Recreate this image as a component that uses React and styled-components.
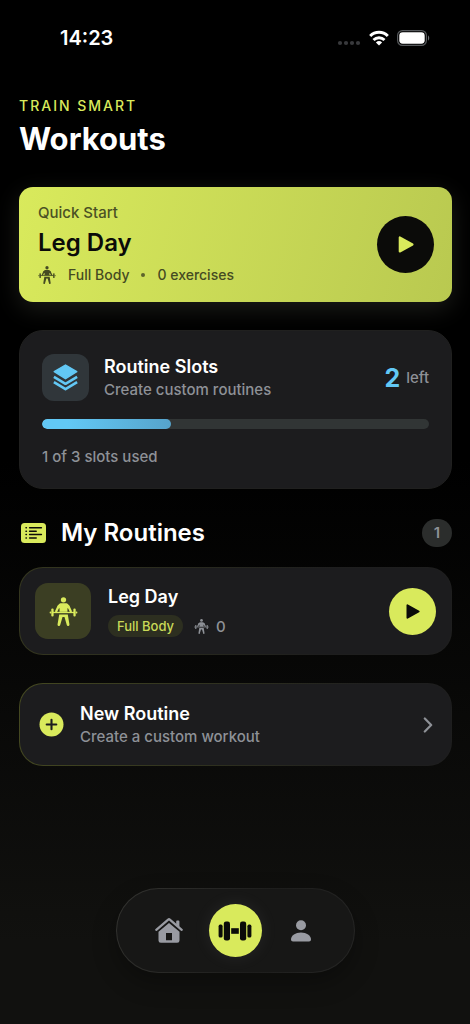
import React from 'react';
import styled, { createGlobalStyle } from 'styled-components';

const lime = '#d9ea5c';
const ink = '#0b0b09';
const blue = '#62c8f5';
const grey = '#8e9197';

const routines = [{ id: 1, name: 'Leg Day', type: 'Full Body', exercises: 0 }];
const slots = { used: 1, total: 3 };

export default function App() {
  const current = routines[0];
  return (
    <>
      <GlobalStyle />
      <Screen>
        <StatusBar>
          <Clock>14:23</Clock>
          <StatusIcons>
            <SignalIcon />
            <WifiIcon />
            <BatteryIcon />
          </StatusIcons>
        </StatusBar>

        <Content>
          <Header>
            <Eyebrow>TRAIN SMART</Eyebrow>
            <Title>Workouts</Title>
          </Header>

          <QuickCard>
            <Grow>
              <QuickLabel>Quick Start</QuickLabel>
              <QuickName>{current.name}</QuickName>
              <QuickMeta>
                <LifterIcon size={18} />
                <span>{current.type}</span>
                <Dot />
                <span>{current.exercises} exercises</span>
              </QuickMeta>
            </Grow>
            <PlayButton $size={57} $bg={ink} $color={lime} aria-label="Start Leg Day">
              <PlayIcon size={17} />
            </PlayButton>
          </QuickCard>

          <SlotsCard>
            <SlotsTop>
              <IconTile $size={47} $radius={12} $bg="#30363a" $color={blue}>
                <LayersIcon />
              </IconTile>
              <Grow>
                <RowTitle>Routine Slots</RowTitle>
                <RowText>Create custom routines</RowText>
              </Grow>
              <SlotsLeft>
                <strong>{slots.total - slots.used}</strong> left
              </SlotsLeft>
            </SlotsTop>
            <Track role="progressbar" aria-label="Slots used" aria-valuenow={slots.used} aria-valuemin={0} aria-valuemax={slots.total}>
              <Fill style={{ width: `${(slots.used / slots.total) * 100}%` }} />
            </Track>
            <SlotsNote>{slots.used} of {slots.total} slots used</SlotsNote>
          </SlotsCard>

          <SectionHead>
            <ListIcon />
            <SectionTitle>My Routines</SectionTitle>
            <Count>{routines.length}</Count>
          </SectionHead>

          {routines.map((routine) => (
            <RoutineCard key={routine.id}>
              <IconTile $size={56} $radius={13} $bg="#3b3e23" $color={lime}>
                <LifterIcon size={29} />
              </IconTile>
              <Grow>
                <RowTitle>{routine.name}</RowTitle>
                <RoutineMeta>
                  <Tag>{routine.type}</Tag>
                  <LifterIcon size={15} />
                  <span>{routine.exercises}</span>
                </RoutineMeta>
              </Grow>
              <PlayButton $size={47} $bg={lime} $color={ink} aria-label={`Start ${routine.name}`}>
                <PlayIcon size={15} />
              </PlayButton>
            </RoutineCard>
          ))}

          <NewRoutine type="button">
            <PlusIcon />
            <Grow>
              <RowTitle as="span">New Routine</RowTitle>
              <RowText as="span">Create a custom workout</RowText>
            </Grow>
            <ChevronIcon />
          </NewRoutine>
        </Content>

        <TabBar>
          <TabButton aria-label="Home"><HomeIcon /></TabButton>
          <TabButton $active aria-label="Workouts" aria-current="page"><DumbbellIcon /></TabButton>
          <TabButton aria-label="Profile"><PersonIcon /></TabButton>
        </TabBar>
      </Screen>
    </>
  );
}

function SignalIcon() {
  return (
    <svg width="24" height="16" viewBox="0 0 24 16" fill="#38393c">
      {[3, 9, 15, 21].map((x) => <circle key={x} cx={x} cy="13" r="2.1" />)}
    </svg>
  );
}

function WifiIcon() {
  return (
    <svg width="20" height="16" viewBox="0 0 20 16" fill="none" stroke="#fff" strokeWidth="3">
      <path d="M1.2 6a12.4 12.4 0 0 1 17.6 0" />
      <path d="M4.5 10a8 8 0 0 1 11 0" />
      <path d="M10 15.6l-3.1-3.1a4.5 4.5 0 0 1 6.2 0z" fill="#fff" stroke="none" />
    </svg>
  );
}

function BatteryIcon() {
  return (
    <svg width="33" height="16" viewBox="0 0 33 16">
      <rect x="0.6" y="0.6" width="28.8" height="14.8" rx="4.8" fill="none" stroke="#55585b" strokeWidth="1.2" />
      <rect x="2.3" y="2.3" width="25.4" height="11.4" rx="3.4" fill="#fff" />
      <path d="M31 5.5c1.6.6 1.6 4.4 0 5z" fill="#6b6e71" />
    </svg>
  );
}

function LifterIcon({ size }) {
  return (
    <svg width={size} height={size} viewBox="0 0 84 88" fill="currentColor">
      <circle cx="42" cy="8.5" r="8" />
      <path d="M36 19h12c5 0 8 2 10 6l4 9H22l4-9c2-4 5-6 10-6z" />
      <path d="M30 30h24v15H30z" />
      <path d="M27 28 20 43M57 28l7 15" fill="none" stroke="currentColor" strokeWidth="7" strokeLinecap="round" />
      <rect x="8" y="45" width="68" height="4" />
      <rect x="5" y="35" width="7" height="24" rx="3" />
      <rect x="72" y="35" width="7" height="24" rx="3" />
      <rect x="0" y="44" width="5" height="6" rx="2" />
      <rect x="79" y="44" width="5" height="6" rx="2" />
      <path d="M29 53h26l5 30c1 5-7 7-8 2l-7-24h-6l-7 24c-1 5-9 3-8-2z" />
    </svg>
  );
}

function PlayIcon({ size }) {
  return (
    <svg width={size} height={size} viewBox="0 0 16 16" fill="currentColor" stroke="currentColor" strokeWidth="2" strokeLinejoin="round">
      <path d="M2.6 1.4v13.2L14.6 8z" />
    </svg>
  );
}

function LayersIcon() {
  return (
    <svg width="25" height="27" viewBox="0 0 25 27">
      <path d="M12.5 1.1 23.7 7.6 12.5 14.6 1.3 7.6z" fill="currentColor" stroke="currentColor" strokeWidth="1.6" strokeLinejoin="round" />
      <g fill="none" stroke="currentColor" strokeWidth="2.6" strokeLinejoin="round">
        <path d="M.9 12.8 12.5 19.8l11.600-7" />
        <path d="M.9 18.1 12.5 25.1l11.600-7" />
      </g>
    </svg>
  );
}

function ListIcon() {
  return (
    <svg width="25" height="20" viewBox="0 0 25 20">
      <rect width="25" height="20" rx="3.5" fill={lime} />
      <g stroke={ink} strokeWidth="1.5" strokeLinecap="round">
        <path d="M8.6 4.800h11.800M8.600 8.200h6.600M8.600 11.600h11.800M8.600 15h6.600" />
        <path d="M5 4.800h.4M5 8.200h.4M5 11.600h.4M5 15h.4" />
      </g>
    </svg>
  );
}

function PlusIcon() {
  return (
    <svg width="25" height="25" viewBox="0 0 25 25">
      <circle cx="12.5" cy="12.5" r="12" fill={lime} />
      <path d="M12.5 7.7v9.6M7.7 12.5h9.6" stroke="#1c1c1e" strokeWidth="2.1" strokeLinecap="round" />
    </svg>
  );
}

function ChevronIcon() {
  return (
    <svg width="10" height="16" viewBox="0 0 10 16" fill="none" stroke={grey} strokeWidth="2.2" strokeLinecap="round" strokeLinejoin="round">
      <path d="M1.8 1.5 8.2 8l-6.4 6.5" />
    </svg>
  );
}

function HomeIcon() {
  return (
    <svg width="28" height="25" viewBox="0 0 28 25" fill="currentColor">
      <path d="M1.3 11.8 13.2 1.6a1.300 1.300 0 0 1 1.600 0l11.900 10.200" fill="none" stroke="currentColor" strokeWidth="2.300" strokeLinecap="round" strokeLinejoin="round" />
      <path d="M21.200 3.400q0-.9.9-.9h1.400q.9 0 .9.900v6.200l-3.200-2.800z" />
      <path fillRule="evenodd" d="M14 4.900 24.500 13.800v8.700a2.300 2.300 0 0 1-2.300 2.300H5.800a2.300 2.300 0 0 1-2.300-2.300v-8.700zM11 15v7.300h6V15z" />
    </svg>
  );
}

function DumbbellIcon() {
  return (
    <svg width="34" height="20" viewBox="0 0 34 20" fill="currentColor">
      <rect x="0.6" y="3.6" width="4" height="13" rx="1.6" />
      <rect x="5.8" y="0.5" width="6.2" height="19" rx="2.2" />
      <rect x="13.2" y="7.2" width="7.6" height="5.6" />
      <rect x="22" y="0.5" width="6.2" height="19" rx="2.2" />
      <rect x="29.4" y="3.6" width="4" height="13" rx="1.6" />
    </svg>
  );
}

function PersonIcon() {
  return (
    <svg width="20" height="22" viewBox="0 0 20 22" fill="currentColor">
      <circle cx="10" cy="5.2" r="5" />
      <path d="M0 19.4C0 15.4 4.5 12.4 10 12.4s10 3 10 7c0 1.3-.8 2-2 2H2c-1.2 0-2-.7-2-2z" />
    </svg>
  );
}

const GlobalStyle = createGlobalStyle`
  * {
    box-sizing: border-box;
  }
  body {
    margin: 0;
    background: #000;
    color: #fff;
    font-family: Inter, 'Noto Sans', sans-serif;
  }
  h1, h2, h3, p {
    margin: 0;
  }
  button {
    padding: 0;
    border: 0;
    font: inherit;
    color: inherit;
    cursor: pointer;
  }
  svg {
    display: block;
    flex: none;
  }
`;

const Screen = styled.div`
  min-height: 100vh;
  display: flex;
  flex-direction: column;
  background: linear-gradient(#000 45%, #11110f 92%);
`;

const StatusBar = styled.div`
  display: flex;
  align-items: center;
  justify-content: space-between;
  height: 76px;
  padding: 0 40px 0 60px;
`;

const Clock = styled.div`
  font-size: 20px;
  font-weight: 600;
`;

const StatusIcons = styled.div`
  display: flex;
  align-items: center;
  gap: 8px;
`;

const Content = styled.main`
  display: flex;
  flex-direction: column;
  padding: 0 18px 0 19px;
`;

const Header = styled.header`
  padding-top: 19px;
  margin-bottom: 26px;
`;

const Eyebrow = styled.p`
  color: ${lime};
  font-size: 14px;
  font-weight: 500;
  line-height: 22px;
  letter-spacing: 2px;
`;

const Title = styled.h1`
  font-size: 31px;
  font-weight: 700;
  line-height: 44px;
`;

const Grow = styled.div`
  flex: 1;
  min-width: 0;
`;

const QuickCard = styled.section`
  display: flex;
  align-items: center;
  padding: 14px 18px 14px 19px;
  margin-bottom: 28px;
  border-radius: 14px;
  background: linear-gradient(105deg, ${lime}, #b9c950);
  box-shadow: 0 7px 24px rgba(220, 224, 190, 0.13);
  color: ${ink};
`;

const QuickLabel = styled.p`
  color: #4b5124;
  font-size: 15px;
  font-weight: 500;
  line-height: 24px;
`;

const QuickName = styled.h2`
  font-size: 24px;
  font-weight: 600;
  line-height: 36px;
`;

const QuickMeta = styled.div`
  display: flex;
  align-items: center;
  gap: 12px;
  color: #454b22;
  font-size: 14px;
  font-weight: 500;
  line-height: 27px;
`;

const Dot = styled.span`
  width: 4px;
  height: 4px;
  border-radius: 50%;
  background: #5d642c;
`;

const PlayButton = styled.button`
  display: flex;
  align-items: center;
  justify-content: center;
  flex: none;
  width: ${(p) => p.$size}px;
  height: ${(p) => p.$size}px;
  border-radius: 50%;
  background: ${(p) => p.$bg};
  color: ${(p) => p.$color};
`;

const Card = styled.section`
  border: 1px solid #20201f;
  border-radius: 24px;
  background: #1c1c1e;
`;

const SlotsCard = styled(Card)`
  padding: 23px 22px 20px;
  margin-bottom: 28px;
`;

const SlotsTop = styled.div`
  display: flex;
  align-items: center;
  gap: 15px;
  margin-bottom: 18px;
`;

const IconTile = styled.div`
  display: flex;
  align-items: center;
  justify-content: center;
  flex: none;
  width: ${(p) => p.$size}px;
  height: ${(p) => p.$size}px;
  border-radius: ${(p) => p.$radius}px;
  background: ${(p) => p.$bg};
  color: ${(p) => p.$color};
`;

const RowTitle = styled.h3`
  display: block;
  font-size: 18px;
  font-weight: 600;
  line-height: 24px;
`;

const RowText = styled.p`
  display: block;
  color: ${grey};
  font-size: 15px;
  font-weight: 500;
  line-height: 21px;
`;

const SlotsLeft = styled.p`
  display: flex;
  align-items: center;
  gap: 6px;
  color: ${grey};
  font-size: 15px;
  font-weight: 500;

  strong {
    color: ${blue};
    font-size: 25px;
    line-height: 32px;
  }
`;

const Track = styled.div`
  height: 10px;
  border-radius: 5px;
  background: #313535;
  overflow: hidden;
`;

const Fill = styled.div`
  height: 100%;
  border-radius: 5px;
  background: linear-gradient(90deg, ${blue} 20%, #56a3cb);
`;

const SlotsNote = styled.p`
  margin-top: 17px;
  color: ${grey};
  font-size: 15px;
  font-weight: 500;
  line-height: 22px;
`;

const SectionHead = styled.div`
  display: flex;
  align-items: center;
  gap: 15px;
  padding-left: 2px;
  margin-bottom: 18px;
`;

const SectionTitle = styled.h2`
  flex: 1;
  font-size: 24px;
  font-weight: 600;
  line-height: 32px;
`;

const Count = styled.span`
  padding: 0 12px;
  border-radius: 14px;
  background: #2b2d2c;
  color: ${grey};
  font-size: 15px;
  font-weight: 600;
  line-height: 28px;
`;

const RoutineCard = styled(Card)`
  display: flex;
  align-items: center;
  gap: 17px;
  padding: 15px;
  margin-bottom: 28px;
  border-color: transparent;
  background: linear-gradient(#1c1c1e, #1c1c1e) padding-box, linear-gradient(100deg, #35371f, #1e1e1e 70%) border-box;
`;

const RoutineMeta = styled.div`
  display: flex;
  align-items: center;
  gap: 7px;
  margin-top: 6px;
  color: ${grey};
  font-size: 15px;
  font-weight: 500;
`;

const Tag = styled.span`
  padding: 0 9px;
  margin-right: 4px;
  border-radius: 11px;
  background: #2d2f20;
  color: #c9d958;
  font-size: 13px;
  font-weight: 500;
  line-height: 22px;
`;

const NewRoutine = styled.button`
  && {
    display: flex;
    align-items: center;
    gap: 16px;
    width: 100%;
    padding: 18px 18px 18px 19px;
    border: 1px solid transparent;
    border-radius: 24px;
    background: linear-gradient(#1c1c1e, #1c1c1e) padding-box, linear-gradient(100deg, #454921, #1e1e1e 80%) border-box;
    text-align: left;
  }
`;

const TabBar = styled.nav`
  display: flex;
  align-items: center;
  justify-content: center;
  gap: 13px;
  align-self: center;
  height: 85px;
  padding: 0 26px;
  margin: auto 0 51px;
  border: 1px solid transparent;
  border-radius: 43px;
  background: linear-gradient(#171716, #171716) padding-box, linear-gradient(110deg, #333330, #1d1d1c 60%, #262625) border-box;
  box-shadow: 0 10px 24px rgba(0, 0, 0, 0.3);
`;

const TabButton = styled.button`
  display: flex;
  align-items: center;
  justify-content: center;
  width: 53px;
  height: 53px;
  border-radius: 50%;
  background: ${(p) => (p.$active ? lime : 'transparent')};
  box-shadow: ${(p) => (p.$active ? '0 0 18px rgba(220, 220, 230, 0.08)' : 'none')};
  color: ${(p) => (p.$active ? ink : '#999ba2')};
`;
